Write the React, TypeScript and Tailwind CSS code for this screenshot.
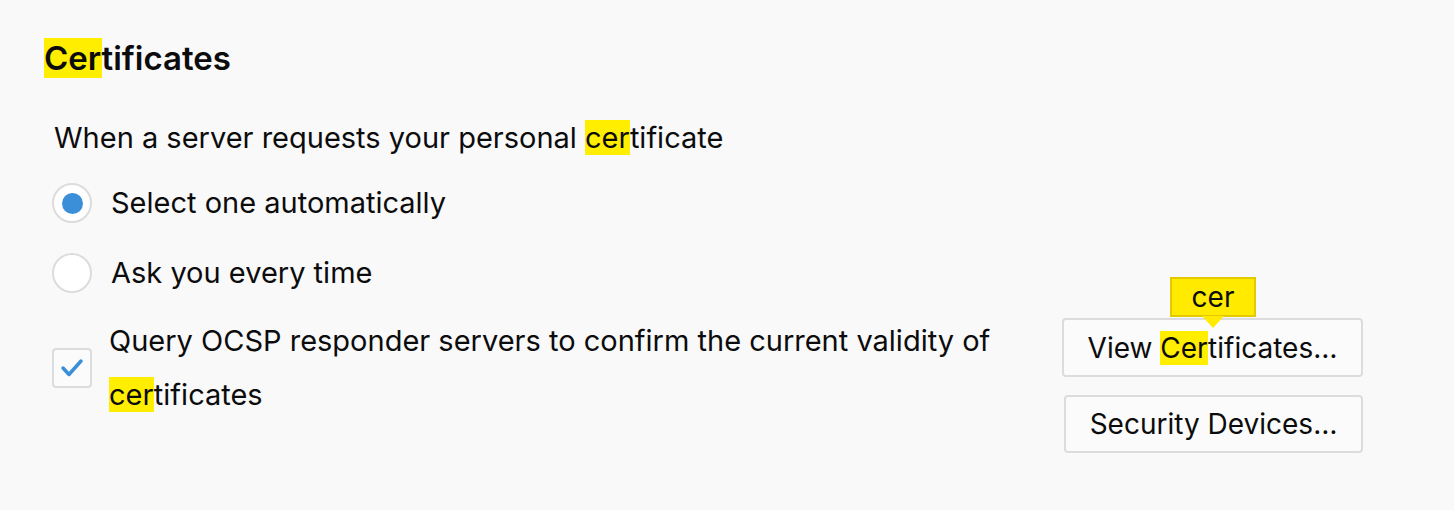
import React from "react";

const HL = ({ children }: { children: React.ReactNode }) => (
  <span className="bg-[#ffee00]">{children}</span>
);

function Radio({ checked, label }: { checked?: boolean; label: string }) {
  return (
    <div className="flex items-center h-[40px]">
      <span className="flex items-center justify-center w-[40px] h-[40px] rounded-full border-2 border-[#dcdcdc] bg-white shrink-0">
        {checked && <span className="w-[21px] h-[21px] rounded-full bg-[#3a8fd8]" />}
      </span>
      <span className="ml-[19px]">{label}</span>
    </div>
  );
}

export default function App() {
  return (
    <div className="min-h-[510px] bg-[#f9f9fa] text-[#0c0c0d] pl-[44px] pt-[38px] font-['Inter','Liberation_Sans',sans-serif]">
      <h2 className="text-[33px] leading-[40px] font-semibold">
        <HL>Cer</HL>tificates
      </h2>
      <div className="pl-[8px] pr-[91px] text-[29px]">
        <p className="mt-[40px] ml-[2px] leading-[40px]">
          When a server requests your personal <HL>cer</HL>tificate
        </p>
        <div className="mt-[25px]">
          <Radio checked label="Select one automatically" />
        </div>
        <div className="mt-[30px]">
          <Radio label="Ask you every time" />
        </div>
        <div className="mt-[21px] flex justify-between items-start">
          <div className="flex items-center">
            <span className="flex items-center justify-center w-[40px] h-[40px] rounded-[4px] border-2 border-[#dcdcdc] bg-[#fbfbfb] shrink-0">
              <svg width="24" height="22" viewBox="0 0 24 22">
                <polyline points="3,11 9,17.5 21,4" fill="none" stroke="#3a8fd8" strokeWidth="3.5" strokeLinecap="round" strokeLinejoin="round" />
              </svg>
            </span>
            <span className="ml-[17px] leading-[54px]">
              Query OCSP responder servers to confirm the current validity of
              <br />
              <HL>cer</HL>tificates
            </span>
          </div>
          <div className="mt-[4px] flex flex-col items-end">
            <div className="relative">
              <button className="w-[301px] h-[59px] rounded-[4px] border-2 border-[#dcdcdf] bg-[#fbfbfb] text-[28px]">
                View <HL>Cer</HL>tificates…
              </button>
              <div className="absolute left-[108px] top-[-41px] w-[86px] h-[40px] bg-[#ffea00] border-2 border-[#e3c900] flex items-center justify-center text-[28px] leading-none">
                cer
                <span className="absolute left-[30px] bottom-[-13px] w-0 h-0 border-l-[11px] border-r-[11px] border-t-[12px] border-l-transparent border-r-transparent border-t-[#ffea00]" />
              </div>
            </div>
            <button className="mt-[18px] w-[299px] h-[58px] rounded-[4px] border-2 border-[#dcdcdf] bg-[#fbfbfb] text-[28px]">
              Security Devices…
            </button>
          </div>
        </div>
      </div>
    </div>
  );
}
